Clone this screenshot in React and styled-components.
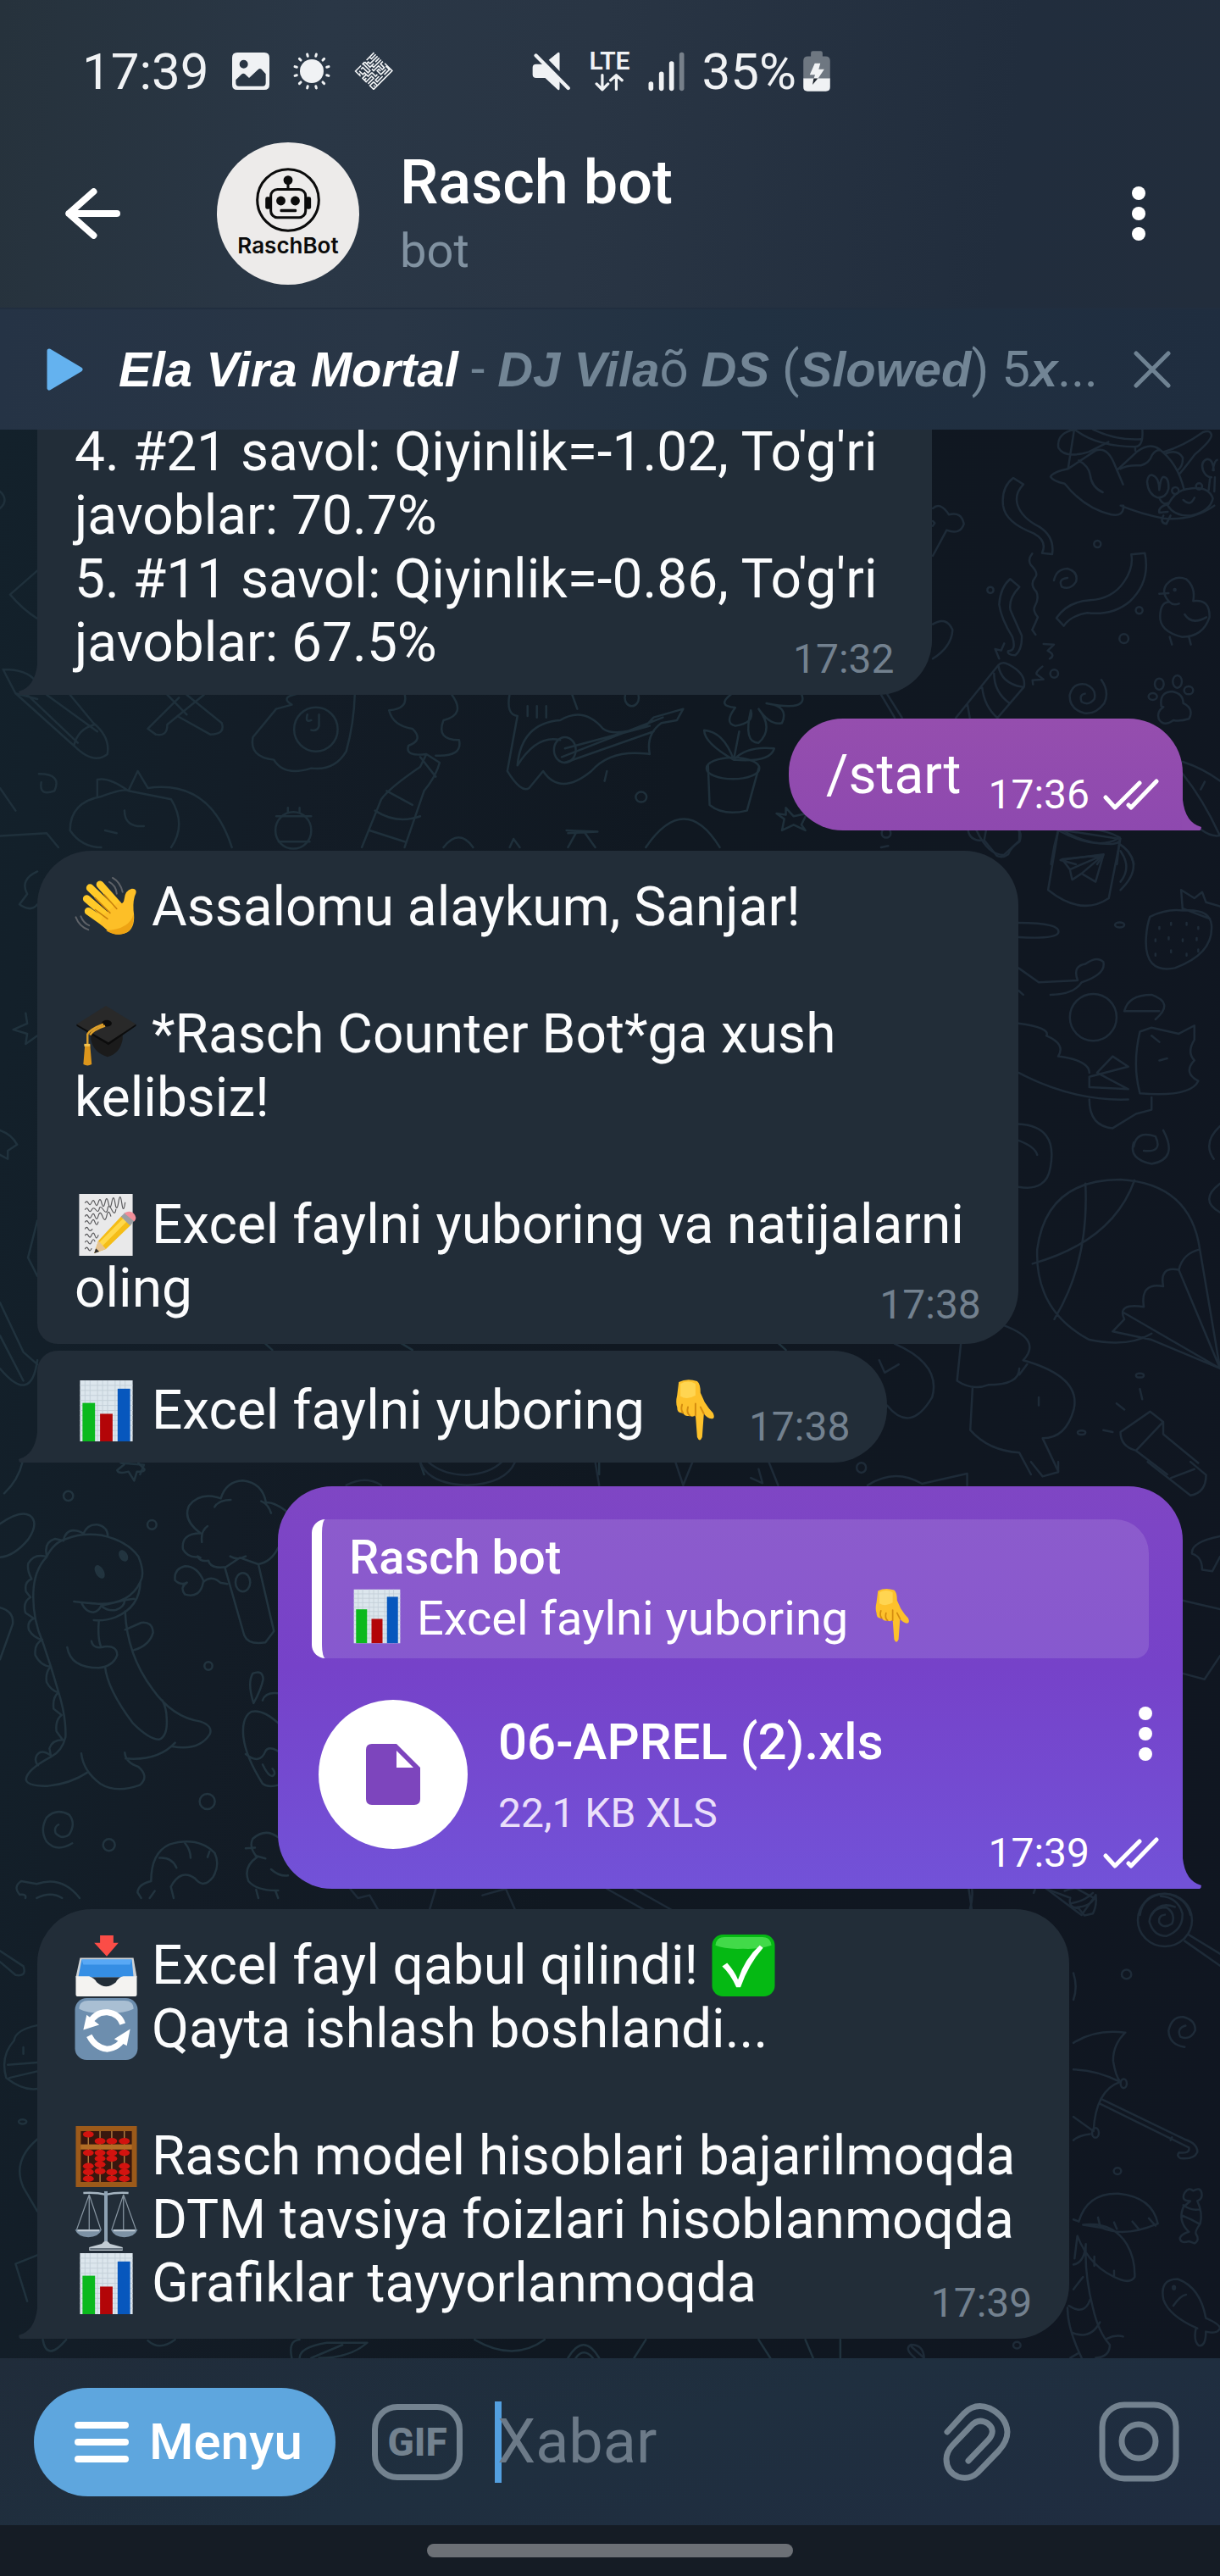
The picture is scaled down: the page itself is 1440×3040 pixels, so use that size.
import React from "react";
import styled, { createGlobalStyle, css } from "styled-components";

const GlobalStyle = createGlobalStyle`
  * { box-sizing: border-box; }
  body { margin: 0; background: #111923; font-family: Roboto, "Noto Sans", sans-serif; }
  button, input { font: inherit; color: inherit; border: 0; padding: 0; margin: 0; background: none; }
  button { cursor: pointer; display: flex; align-items: center; }
  svg { display: block; flex: none; }
`;

/* ---------- layout ---------- */

const Screen = styled.main`
  display: flex;
  flex-direction: column;
  height: 100vh;
  overflow: hidden;
  color: #fff;
`;

const TopBar = styled.header`
  flex: none;
  padding-bottom: 27px;
  background: linear-gradient(97deg, #26323c 0%, #2a3746 26%, #293544 48%, #212d3d 82%, #222d3c 100%);
`;

const StatusBar = styled.div`
  display: flex;
  align-items: center;
  height: 168px;
  padding-left: 97px;
  font-size: 60px;
  color: #f0f2f4;
`;

const StatusGroup = styled.div`
  display: flex;
  align-items: center;
  gap: ${(p) => p.$gap}px;
  & + & { margin-left: 164px; }
`;

const Network = styled.div`
  display: flex;
  flex-direction: column;
  align-items: center;
  gap: 4px;
  font-size: 30px;
  line-height: 21px;
  font-weight: 600;
`;

const BatteryLevel = styled.div`
  display: flex;
  align-items: center;
  gap: 8px;
`;

const ChatHeader = styled.div`
  display: flex;
  align-items: center;
  padding: 0 88px 0 77px;
`;

const Avatar = styled.div`
  display: flex;
  flex-direction: column;
  align-items: center;
  flex: none;
  width: 168px;
  height: 168px;
  margin: 0 48px 0 114px;
  padding-top: 30px;
  border-radius: 50%;
  background: #edebea;
  color: #0b0b0b;
  font: 600 26px/32px Inter, "Liberation Sans", sans-serif;
`;

const Titles = styled.div`
  flex: 1;
  min-width: 0;
`;

const Title = styled.h1`
  margin: 0 0 4px;
  font-size: 72px;
  line-height: 84px;
  font-weight: 500;
`;

const Subtitle = styled.p`
  margin: 0;
  font-size: 56px;
  line-height: 68px;
  color: #8192a1;
`;

const Player = styled.section`
  display: flex;
  align-items: center;
  flex: none;
  height: 144px;
  padding: 0 58px 0 55px;
  border-top: 2px solid #212e3f;
  background: linear-gradient(95deg, #253345 0%, #293646 32%, #213142 60%, #1f2d3f 100%);
`;

const Track = styled.p`
  flex: 1;
  min-width: 0;
  margin: 0 16px 0 42px;
  overflow: hidden;
  white-space: nowrap;
  text-overflow: ellipsis;
  font-size: 60px;
  line-height: 80px;
  color: #728595;
`;

const Fancy = styled.b`
  font-family: "Liberation Sans", Arial, sans-serif;
  font-style: italic;
  font-size: 58px;
  color: ${(p) => (p.$bright ? "#fff" : "inherit")};
`;

const Chat = styled.section`
  position: relative;
  display: flex;
  flex: 1;
  flex-direction: column;
  justify-content: flex-end;
  align-items: flex-start;
  min-height: 0;
  padding: 0 44px 23px;
  overflow: hidden;
  background: linear-gradient(96deg, #13212b 0%, #131c26 24%, #101821 50%, #101621 100%);
`;

const Wallpaper = styled.svg`
  position: absolute;
  inset: 0;
  width: 100%;
  height: 100%;
  path, circle, ellipse { vector-effect: non-scaling-stroke; }
`;

/* ---------- messages ---------- */

const outgoingFill = {
  start: "linear-gradient(#954eae, #8e49af)",
  file: "linear-gradient(#7f46c4 0%, #7642c9 45%, #7252d8 100%)",
};

const Bubble = styled.article`
  position: relative;
  display: grid;
  flex: none;
  max-width: 100%;
  margin-top: ${(p) => p.$gap}px;
  border-radius: 64px;
  font-size: 64px;
  line-height: 75px;
  color: #fbfcfd;
  background: #222d38;
  padding: 29px 44px 14px;
  ${(p) => p.$grouped && css`padding-top: 33px;`}
  ${(p) => p.$lifted && css`padding-bottom: 18px;`}
  ${(p) => p.$inline && css`grid-template-columns: auto auto; column-gap: 32px;`}
  ${(p) => p.$fill && css`
    align-self: flex-end;
    color: #fff;
    background: ${outgoingFill[p.$fill]};
  `}
  ${(p) => p.$corners && css`border-radius: ${p.$corners};`}
`;

const StartBubble = styled(Bubble)`
  padding-right: 28px;
`;

const FileBubble = styled(Bubble)`
  width: 1068px;
  padding: 39px 28px 14px 40px;
`;

const Text = styled.p`
  margin: 0;
  padding-bottom: ${(p) => (p.$grouped ? 10 : 14)}px;
  padding-right: ${(p) => (p.$wide ? 20 : 0)}px;
  white-space: pre-line;
  ${(p) => p.$wide && css`grid-area: 1 / 1;`}
`;

const Line = styled.span`
  display: block;
`;

const Meta = styled.div`
  display: flex;
  align-items: center;
  align-self: end;
  justify-self: end;
  gap: 16px;
  font-size: 48px;
  line-height: 56px;
  color: ${(p) => (p.$bright ? "#fff" : "#73818f")};
  ${(p) => p.$overlaid && css`grid-area: 1 / 1;`}
`;

const Tail = styled.svg`
  position: absolute;
  bottom: 0;
  width: 23px;
  height: 40px;
  ${(p) => (p.$right ? css`right: -22px; transform: scaleX(-1);` : css`left: -22px;`)}
`;

const EmojiBox = styled.svg`
  display: inline-block;
  vertical-align: top;
  width: ${(p) => p.$size}px;
  height: ${(p) => p.$size}px;
`;

const Reply = styled.blockquote`
  margin: 0 12px 49px 0;
  padding: 9px 24px 11px 32px;
  border-left: 12px solid #fff;
  border-radius: 16px 40px 16px 16px;
  background: rgba(255, 255, 255, 0.12);
  font-size: 56px;
  line-height: 72px;
`;

const ReplyName = styled.strong`
  display: block;
  font-weight: 500;
`;

const FileRow = styled.div`
  display: flex;
  align-items: flex-start;
  padding: 0 8px;
`;

const FileBadge = styled.div`
  display: grid;
  place-items: center;
  flex: none;
  width: 176px;
  height: 176px;
  margin-right: 36px;
  border-radius: 50%;
  background: #fff;
`;

const FileInfo = styled.div`
  flex: 1;
  padding-top: 14px;
`;

const FileName = styled.a`
  display: block;
  margin-bottom: 20px;
  color: inherit;
  text-decoration: none;
  font-size: 60px;
  line-height: 72px;
  font-weight: 500;
`;

const FileSize = styled.span`
  display: block;
  font-size: 48px;
  line-height: 56px;
  color: #eadffa;
`;

const FileMeta = styled(Meta)`
  margin-top: -23px;
`;

const MoreButton = styled.button`
  flex: none;
  ${(p) => p.$top && css`margin-top: 8px;`}
`;

/* ---------- composer ---------- */

const Composer = styled.form`
  display: flex;
  align-items: center;
  flex: none;
  height: 197px;
  padding: 0 48px 0 40px;
  color: #73828f;
  background: linear-gradient(165deg, #202c3a 0%, #1f2f3f 50%, #1f2c40 100%);
`;

const MenuButton = styled.button`
  flex: none;
  gap: 24px;
  width: 356px;
  height: 128px;
  padding-left: 48px;
  margin-right: 43px;
  border-radius: 64px;
  background: #5ea6de;
  color: #fff;
  font-size: 60px;
  font-weight: 500;
`;

const GifButton = styled.button`
  flex: none;
  justify-content: center;
  width: 107px;
  height: 90px;
  margin-right: 38px;
  border: 7px solid #73828f;
  border-radius: 30px;
  font-size: 46px;
  font-weight: 800;
`;

const Field = styled.label`
  display: flex;
  align-items: center;
  flex: 1;
  min-width: 0;
`;

const Caret = styled.span`
  flex: none;
  width: 8px;
  height: 96px;
  margin-right: -5px;
  background: #539fdf;
`;

const MessageInput = styled.input`
  width: 100%;
  min-width: 0;
  height: 96px;
  outline: 0;
  font-size: 72px;
  line-height: 96px;
  caret-color: transparent;
  &::placeholder { color: #6c7a88; opacity: 1; }
`;

const Actions = styled.div`
  display: flex;
  align-items: center;
  gap: 104px;
`;

const NavBar = styled.footer`
  display: grid;
  place-items: center;
  flex: none;
  height: 60px;
  background: #151c25;
`;

const NavHandle = styled.div`
  width: 432px;
  height: 16px;
  border-radius: 8px;
  background: #6c7076;
`;

/* ---------- emoji ---------- */

const beads = [
  [16, 12], [30, 20], [44, 20], [59, 20], [16, 34], [30, 34], [44, 34], [59, 34],
  [30, 41], [44, 41], [16, 50], [30, 48], [59, 50], [30, 56], [16, 57], [44, 57],
  [59, 57], [16, 65], [44, 65], [59, 65],
];

const emojiArt = {
  wave: (
    <>
      <g stroke="#ffc928" strokeWidth="9" strokeLinecap="round" fill="none">
        <path d="M30 11 52 36M18 15 46 42M14 28 42 52M16 43 40 60" />
      </g>
      <path d="M33 49 52 32Q58 36 59 28Q60 18 68 16Q74 16 73 21Q69 29 70 42Q73 61 63 68Q52 74 40 67L30 58Z" fill="#fdbf27" />
      <path d="M35 23 50 40M24 27 42 45M24 41 39 52" stroke="#c9820e" strokeWidth="1.6" strokeLinecap="round" />
      <path d="M37 66Q52 75 64 67Q71 60 70 46Q66 64 37 66Z" fill="#eea313" />
      <g stroke="#5e6268" strokeWidth="2" fill="none" strokeLinecap="round">
        <path d="M41 8Q49 12 50 22M45 3Q54 8 57 20M7 49Q10 57 17 60M1 50Q5 61 16 65" />
      </g>
    </>
  ),
  cap: (
    <>
      <path d="M19 37V44Q22 60 39 65Q54 61 57 44V34L40 47Z" fill="#1b1b1b" />
      <path d="M37 4 73 26 40 48 2 26Z" fill="#292929" />
      <path d="M2 26 40 48 73 26V28L40 51 2 28Z" fill="#0c0c0c" />
      <ellipse cx="38" cy="25" rx="6" ry="4" fill="#0b0b0b" />
      <path d="M34 26Q18 32 15 38V50M36 28Q21 33 18 39" fill="none" stroke="#e0a12b" strokeWidth="2.4" />
      <path d="M12 50H18L20 74Q15 77 10 74Z" fill="#dc961c" />
      <path d="M11 51H18" stroke="#f6c450" strokeWidth="3" />
    </>
  ),
  memo: (
    <>
      <path d="M5 1H69V75H5Z" fill="#e9e9ea" />
      <g stroke="#5a5a5d" strokeWidth="1.2" fill="none">
        <path d="M12 12q2-4 4 0t4-1 4 1 4-1 4 1 4-1 4 1 4-1 4 1 4-1 4 1 4-1M12 20q2-4 4 0t4 0 5 0 4-1 5 1 5-1 5 1 5-1M12 28q2-4 4 0t4-1 4 1 4-1 5 1 5-1 5 1M12 35q2-4 4 0t4-1 4 1 4-1M12 43q2-4 4 0t5 0M12 51q2-4 4 0t4-1 4 1 4-1M12 59q2-4 4 0t4-1 4 0M12 67q2-4 4 0t4-1" />
      </g>
      <path d="M23 72 28 57 56 27 67 38 37 67Z" fill="#f5bd17" />
      <path d="M29 59 58 30 62 34 33 63Z" fill="#ffd84b" />
      <path d="M23 72 28 57 37 67Z" fill="#e6c391" />
      <path d="M23 72 25 66 29 70Z" fill="#2d2d2d" />
      <path d="M55 28 60 23 71 33 66 39Z" fill="#9c9fa3" />
      <path d="M59 24Q65 20 70 24 75 29 71 34Z" fill="#f28e99" />
    </>
  ),
  chart: (
    <>
      <path d="M6 2H69V75H6Z" fill="#dce6ed" />
      <path d="M6 8H69M6 14H69M6 20H69M6 26H69M6 32H69M6 38H69M6 44H69M6 50H69M6 56H69M6 62H69M6 68H69M12 2V75M18 2V75M27 2V75M33 2V75M39 2V75M48 2V75M54 2V75M60 2V75" stroke="#c3cfd8" strokeWidth="1" />
      <path d="M9 29H24V75H9Z" fill="#0bb91d" />
      <path d="M30 42H45V75H30Z" fill="#b30508" />
      <path d="M51 12H66V75H51Z" fill="#0757bd" />
    </>
  ),
  down: (
    <g transform="translate(6 0)">
      <path d="M18 4Q28-1 40 3Q44 6 44 17L49 28Q54 36 59 41Q62 48 57 48Q52 47 48 42L46 70Q43 77 40 70L38 43Q35 47 31 44Q26 46 23 41Q16 42 16 34Q14 28 16 20Z" fill="#fdc12b" />
      <path d="M38 44V30M31 44Q27 41 29 34M23 41Q20 37 22 31M48 42 44 34" fill="none" stroke="#d48c10" strokeWidth="2" strokeLinecap="round" />
      <path d="M20 6Q29 1 38 6V20Q28 26 20 21Z" fill="#ffd551" />
    </g>
  ),
  inbox: (
    <>
      <path d="M30 2H46V11H52L38 27 23 11H30Z" fill="#fb4d47" />
      <path d="M6 29H70L74 52H1Z" fill="#cfd3d6" />
      <path d="M8 31H68L70 52H4Z" fill="#358ee4" />
      <path d="M8 31H68L66 37H10Z" fill="#58a8f5" />
      <path d="M1 51H17Q23 53 26 58Q37 68 49 58Q52 52 58 51H74V73Q74 75 72 75H3Q1 75 1 73Z" fill="#f4f3f1" />
    </>
  ),
  refresh: (
    <>
      <rect x="0" y="1" width="75" height="74" rx="14" fill="#6d8eae" />
      <path d="M5 14Q5 4 16 4H59Q70 4 70 14Q58 20 37 19 16 20 5 14Z" fill="#a9bfd3" />
      <g fill="none" stroke="#fff" strokeWidth="7">
        <path d="M16 33Q24 17 39 18 53 20 57 32M17 46Q24 60 38 62 53 61 60 46" />
      </g>
      <path d="M14 21 10 39 29 33ZM66 38 47 50 62 58Z" fill="#fff" />
    </>
  ),
  abacus: (
    <>
      <path d="M1 2H74V75H1Z" fill="#9c5a1a" />
      <path d="M7 8H68V24H7ZM7 30H68V69H7Z" fill="#38170e" />
      <path d="M16 8V69M30 8V69M44 8V69M59 8V69" stroke="#b07a40" strokeWidth="1.5" />
      <path d="M7 24H68V30H7Z" fill="#b36d25" />
      <g fill="#d3130f">
        {beads.map(([x, y]) => <ellipse key={`${x}-${y}`} cx={x} cy={y} rx="6.5" ry="3.8" />)}
      </g>
    </>
  ),
  scales: (
    <>
      <path d="M10 6Q25 5 37 8 49 5 64 6" fill="none" stroke="#a5b4c0" strokeWidth="2.5" />
      <path d="M37 4V66" stroke="#8ea2b3" strokeWidth="4" />
      <path d="M17 8 2 50M17 8 31 50M17 8V50M58 8 44 50M58 8 73 50M58 8V50" stroke="#8795a1" strokeWidth="1.3" />
      <path d="M0 50H32Q28 59 16 59 4 59 0 50ZM43 50H75Q71 59 59 59 47 59 43 50Z" fill="#7d92a5" />
      <path d="M3 51H29M46 51H72" stroke="#c3ced7" strokeWidth="2" />
      <path d="M32 67Q37 60 42 67L57 71V75H17V71Z" fill="#c2ccd4" />
      <path d="M18 73H57" stroke="#65727e" strokeWidth="2" />
    </>
  ),
  check: (
    <>
      <rect x="0" y="1" width="75" height="74" rx="13" fill="#05b913" />
      <path d="M4 14Q5 4 15 4H60Q70 4 71 14 56 19 37 18 16 19 4 14Z" fill="#42da49" />
      <path d="M12 39 18 35Q27 45 31 55 39 30 57 14L61 17Q44 36 34 64H29Q22 48 12 39Z" fill="#fff" />
    </>
  ),
};

const Emoji = ({ name, size = 75 }) => (
  <EmojiBox $size={size} viewBox="0 0 75 76" role="img" aria-label={name}>{emojiArt[name]}</EmojiBox>
);

/* ---------- small drawings ---------- */

const BubbleTail = ({ right, color }) => (
  <Tail $right={right} viewBox="0 0 23 40" aria-hidden="true">
    <path d="M22 0H23V40H2Q0 39 0 36 19 31 22 4Z" fill={color} />
  </Tail>
);

const Checks = () => (
  <svg width="66" height="38" viewBox="0 0 66 38" fill="none" stroke="#fff" strokeWidth="5" strokeLinecap="round" strokeLinejoin="round" aria-label="read">
    <path d="M3 22 14 34 43 5M30 31 33 34 63 3" />
  </svg>
);

const Dots = () => (
  <svg width="16" height="64" viewBox="0 0 16 64" fill="#fff" aria-hidden="true">
    <circle cx="8" cy="8" r="8" /><circle cx="8" cy="32" r="8" /><circle cx="8" cy="56" r="8" />
  </svg>
);

const Robot = () => (
  <svg width="76" height="76" viewBox="788 473 224 224" fill="none" stroke="#0b0b0b" strokeWidth="9" aria-hidden="true">
    <circle cx="900" cy="585" r="107" />
    <rect x="840" y="548" width="121" height="98" rx="23" />
    <path d="M900 548V516" />
    <g fill="#0b0b0b" stroke="none">
      <circle cx="900" cy="516" r="16" /><circle cx="875" cy="588" r="16" /><circle cx="925" cy="588" r="16" />
      <rect x="821" y="574" width="18" height="43" rx="7" /><rect x="962" y="574" width="18" height="43" rx="7" />
      <rect x="872" y="617" width="58" height="10" rx="4" />
    </g>
  </svg>
);

const PhotoIcon = () => (
  <svg width="44" height="44" viewBox="0 0 132 132" aria-hidden="true">
    <path fillRule="evenodd" fill="#f0f2f4" d="M18 0H114Q132 0 132 18V114Q132 132 114 132H18Q0 132 0 114V18Q0 0 18 0ZM41 26A15 15 0 1 0 41 56 15 15 0 1 0 41 26ZM13 97V108Q13 119 24 119H108Q119 119 119 108V76L104 59Q98 54 92 60L60 90 45 76Q39 72 33 77Z" />
  </svg>
);

const SunIcon = () => (
  <svg width="44" height="44" viewBox="-66 -66 132 132" stroke="#f0f2f4" strokeWidth="9" strokeLinecap="round" aria-hidden="true">
    <circle r="42" fill="#f0f2f4" stroke="none" />
    {Array.from({ length: 12 }, (_, i) => <path key={i} d="M0-55V-62" transform={`rotate(${15 + i * 30})`} />)}
  </svg>
);

const KuficIcon = () => (
  <svg width="46" height="46" viewBox="-70 -70 140 140" aria-hidden="true">
    <g transform="rotate(45) translate(-48 -48)" fill="none" stroke="#f0f2f4" strokeWidth="5">
      <path d="M2 0V38M11 0V22H2M20 0V38H11V47M29 0V20M29 28V47H2M38 0V38H29M47 0V12H66V22H47V47H38M56 0H94V94M66 4H84V30M75 12V38H56V30H66M84 38V66H75V47M47 56H66V47M2 56H38V66H11V75M2 66V94H28M11 84H29V75H47V56M38 75V94H56V66H66V94M75 75V94H94M75 75H94M84 84H90M20 94V88M47 84V96M2 47V60" />
    </g>
  </svg>
);

const MuteIcon = () => (
  <svg width="46" height="46" viewBox="86 94 138 140" fill="#f0f2f4" aria-hidden="true">
    <path d="M145 124 178 97Q184 94 184 101V164ZM100 139H112L130 140 184 193V226Q184 235 177 230L132 188H100Q87 188 87 176V151Q87 139 100 139Z" />
    <path d="M99 108 215 225" stroke="#f0f2f4" strokeWidth="13" strokeLinecap="round" />
  </svg>
);

const DataArrows = () => (
  <svg width="34" height="22" viewBox="310 172 104 68" fill="none" stroke="#f0f2f4" strokeWidth="10" strokeLinecap="round" strokeLinejoin="round" aria-hidden="true">
    <path d="M337 180V233M316 212 337 233 358 212M388 232V181M367 199 388 180 409 199" />
  </svg>
);

const SignalIcon = () => (
  <svg width="43" height="47" viewBox="490 95 129 141" stroke="#f0f2f4" strokeWidth="17" strokeLinecap="round" aria-hidden="true">
    <path d="M500 209V225M537 174V225M573 137V225" />
    <path d="M609 106V225" stroke="#77808a" />
  </svg>
);

const BatteryIcon = () => (
  <svg width="32" height="48" viewBox="1047 92 96 146" aria-hidden="true">
    <path d="M1074 112V100Q1074 93 1081 93H1109Q1116 93 1116 100V112H1126Q1143 112 1143 128V192H1047V128Q1047 112 1064 112Z" fill="#6e7781" />
    <path d="M1047 191H1143V222Q1143 237 1128 237H1062Q1047 237 1047 222Z" fill="#f0f2f4" />
    <path d="M1088 137H1108L1102 158H1122L1099 192H1084L1089 178H1070Z" fill="#f0f2f4" />
    <path d="M1084 191H1099L1080 214Z" fill="#1c232b" />
  </svg>
);

const BackIcon = () => (
  <svg width="65" height="60" viewBox="110 543 196 180" fill="none" stroke="#fff" strokeWidth="24" strokeLinecap="round" strokeLinejoin="round" aria-hidden="true">
    <path d="M211 555 123 633 211 711M123 633H294" />
  </svg>
);

const PlayIcon = () => (
  <svg width="43" height="50" viewBox="0 0 43 50" aria-hidden="true">
    <path d="M3 3 40 25 3 47Z" fill="#64b2ef" stroke="#64b2ef" strokeWidth="5" strokeLinejoin="round" />
  </svg>
);

const CloseIcon = () => (
  <svg width="44" height="44" viewBox="0 0 44 44" stroke="#6f8292" strokeWidth="5" strokeLinecap="round" aria-hidden="true">
    <path d="M3 3 41 41M41 3 3 41" />
  </svg>
);

const FileIcon = () => (
  <svg width="64" height="72" viewBox="0 0 64 72" aria-hidden="true">
    <path fillRule="evenodd" d="M7 0H36L64 28V65Q64 72 57 72H7Q0 72 0 65V7Q0 0 7 0ZM36 8V28H56Z" fill="#7d45bd" />
  </svg>
);

const MenuIcon = () => (
  <svg width="64" height="48" viewBox="0 0 64 48" stroke="#fff" strokeWidth="8" strokeLinecap="round" aria-hidden="true">
    <path d="M4 4H60M4 24H60M4 44H60" />
  </svg>
);

const ClipIcon = () => (
  <svg width="80" height="92" viewBox="0 0 80 92" fill="none" stroke="#73828f" strokeWidth="7" strokeLinecap="round" aria-hidden="true">
    <path d="M5 34 25 12Q38-1 55 6 75 16 76 34 76 45 66 56L41 82Q31 91 18 87 4 81 4 66 4 58 11 50L33 27Q42 17 53 24 63 32 54 43L30 68" />
  </svg>
);

const CameraIcon = () => (
  <svg width="95" height="95" viewBox="0 0 95 95" fill="none" stroke="#73828f" strokeWidth="7" aria-hidden="true">
    <rect x="4" y="4" width="87" height="87" rx="26" /><circle cx="47" cy="47" r="20" />
  </svg>
);

/* Line doodles behind the conversation, grouped by the area they cover. */
const Doodles = () => (
  <Wallpaper viewBox="0 507 1440 2276" preserveAspectRatio="xMidYMid slice" fill="none" stroke="#1e2b38" strokeWidth="2.5" strokeLinecap="round" strokeLinejoin="round" aria-hidden="true">
    <g transform="translate(1040 500) scale(.3333)">
      <path d="M684 20Q620 35 628 85 650 125 735 100L805 65M684 20 662 160Q610 170 600 188 610 205 650 212 720 300 815 322 860 330 858 290L848 290Q920 320 1000 335 1100 345 1180 290M665 158 760 95Q800 80 825 140L857 215M700 130Q735 150 740 180 745 225 785 243M835 165 905 100Q950 65 985 90 1050 140 1072 230M848 160Q870 145 920 148 950 140 960 110 975 90 990 95M685 20Q760 80 900 82 930 80 925 20M750 20Q830 60 920 55M900 82V95M1000 100Q1070 80 1140 30 1165 20 1170 40 1170 60 1110 110 1080 150 1055 180M1010 105Q1050 90 1068 120 1070 150 1050 165" />
      <path d="M985 235Q990 190 1000 188 1020 190 1018 230 1010 262 980 262 945 250 942 205 945 180 960 182 985 190 985 235M1175 165Q1180 130 1190 128M1178 165Q1175 125 1155 125 1130 135 1140 165 1150 190 1170 190M1015 290Q1040 235 1090 230 1160 220 1175 265 1165 310 1100 325 1040 330 1015 290M1070 270Q1095 295 1110 262M985 262Q995 290 1018 280M1160 235 1165 190M1182 190 1180 240M1015 285Q980 295 985 315L1015 312M1000 325Q985 350 1010 355L1025 325" />
      <circle cx="1042" cy="237" r="12" /><circle cx="1126" cy="222" r="11" />
      <path d="M468 192 504 215Q470 250 484 290 500 335 560 365 615 400 606 462L570 458Q590 415 540 388 440 350 432 290 425 225 468 192ZM457 550 490 578Q450 620 458 660 480 710 498 750 500 800 475 820 445 818 450 805 480 805 465 755 425 690 418 640 422 580 457 550ZM886 463 934 458Q955 560 880 630 820 680 730 670 670 680 647 716L621 688Q660 630 740 625 820 620 860 560 895 510 886 463Z" />
      <path d="M535 460Q518 480 530 500 560 530 545 545 525 570 550 595 560 620 545 645 535 660 555 685 545 710 535 730L547 747M612 555Q620 515 660 513 700 525 690 560 670 590 640 578 625 550 660 546M780 907Q810 950 790 990 760 1030 720 1025 665 1010 668 960 680 915 725 923 765 940 755 975 735 1000 710 985 700 960 722 956M404 798 418 832 404 798 425 803 436 778M575 780 612 782 590 804Q620 820 597 832M571 860Q540 885 555 890L575 905 536 908 538 923" />
      <path d="M265 1041 415 855Q430 840 450 852 515 885 506 932L412 1042M415 855Q425 920 500 932M400 885Q400 950 455 990M358 935Q365 1000 412 1042M306 995 314 1041M183 300Q210 275 240 322 285 310 293 355 280 395 232 377L183 468M183 345 190 352 183 362M183 710Q230 680 253 730 250 790 183 832M0 960 48 1041M20 955 74 1041" />
      <path d="M1022 632Q990 600 1010 570 1040 535 1080 550 1115 580 1105 628 1165 620 1163 685 1140 755 1065 755 985 735 988 680 990 630 1022 632 1035 645 1055 637M985 602 1018 600M1075 675Q1100 715 1152 685M1022 755 1030 782M1090 755 1097 782" />
      <path d="M992 1000Q985 950 1030 948 1070 955 1070 990 1110 1010 1090 1045 1060 1055 1035 1050 1000 1075 983 1045 975 1020 1000 1003Z" />
      <ellipse cx="985" cy="922" rx="16" ry="20" /><ellipse cx="1049" cy="913" rx="16" ry="22" /><ellipse cx="1089" cy="944" rx="16" ry="14" /><ellipse cx="962" cy="966" rx="15" ry="12" />
      <circle cx="766" cy="426" r="12" /><circle cx="387" cy="589" r="11" /><circle cx="914" cy="661" r="12" /><circle cx="860" cy="761" r="16" /><circle cx="613" cy="885" r="14" /><circle cx="1040" cy="588" r="3" /><circle cx="18" cy="1450" r="16" />
      <path d="M1068 1197Q1140 1220 1200 1265M1068 1240Q1140 1330 1198 1455M1146 1268 1132 1295M1130 1435Q1170 1465 1200 1458M308 1440Q315 1480 365 1475L410 1530Q430 1540 450 1525 460 1500 490 1480 500 1450 485 1438M365 1475 372 1438M628 1437Q610 1500 602 1560M628 1437 845 1470 835 1560M640 1438Q720 1490 820 1488 850 1485 845 1465 800 1440 750 1437M845 1490Q885 1510 895 1560M635 1545 788 1525 765 1560M635 1545 690 1560M0 1500 25 1495" />
    </g>
    <g transform="translate(0 500) scale(.9184 .3333)" stroke="#1f303b">
      <path d="M4 870 20 955 95 1140Q120 1210 138 1170 142 1110 120 1060L90 960M20 955 48 975M35 960 100 1130M60 960 125 1090M95 1140Q100 1080 122 1065M4 870Q35 870 45 910M13 605 48 520M13 605Q30 660 48 690M0 240Q12 270 0 300" />
      <path d="M200 1100 190 1080 230 970M200 1100Q215 1110 215 1065L262 960M228 1035 270 1100Q290 1100 285 1060L240 960M215 960 240 1030" />
      <path d="M355 1010Q340 1060 325 1110 320 1180 352 1190 365 1250 400 1220 430 1230 445 1160 455 1060 456 958M355 1010 375 995Q360 970 380 958M395 1030Q392 1060 400 1050M410 1030V1070Q408 1090 400 1085" /><ellipse cx="406" cy="1082" rx="28" ry="78" />
      <path d="M520 957Q525 1010 500 1015 505 1070 530 1080 545 1120 525 1140 520 1180 548 1170L540 1215Q500 1290 490 1330L465 1500M548 1170 565 1200Q560 1250 545 1300L520 1500M580 957Q600 1030 570 1050 560 1120 590 1120 595 1180 560 1175M540 1180 560 1250M497 1300 530 1350M482 1370Q510 1420 540 1390M475 1440 520 1480" />
      <path d="M655 957Q650 1030 665 1035L652 1230Q670 1310 680 1290L698 1230Q720 1320 760 1230 785 1150 835 1170 830 1100 850 1060L870 1050 878 1010 840 1040 830 1070Q790 1110 775 1080 750 1000 720 1050 670 1060 665 1210 690 1100 720 1120M722 1180 852 1040M726 1150 835 1070M726 1200 840 1090M780 1230 777 1265M735 957 742 1010M678 1000V1035M690 1000V1040M702 1000V1040" /><ellipse cx="726" cy="1155" rx="14" ry="45" /><ellipse cx="812" cy="970" rx="9" ry="30" />
      <path d="M940 957Q920 1000 945 1005 930 1060 945 1070 970 1060 965 1015 955 1130 975 1130 995 1080 975 1010 990 1070 1005 1060 1015 1000 985 990 1040 1020 1030 957M943 1190Q905 1130 905 1085 930 1090 943 1190 960 1140 995 1150 990 1200 943 1190ZM943 1190 950 1090M910 1210 912 1350Q930 1390 960 1370L975 1220" /><ellipse cx="942" cy="1220" rx="34" ry="38" />
      <path d="M50 1240Q80 1240 70 1300 50 1320 53 1270M90 1440Q90 1340 130 1320 160 1290 165 1300L177 1230 190 1290Q270 1260 298 1500M90 1440Q105 1500 130 1500M125 1320V1260Q140 1250 165 1300L220 1330Q240 1420 220 1500M135 1440 150 1450M160 1370Q160 1430 185 1425M0 1290 20 1370M0 1460 60 1450 75 1500" />
      <ellipse cx="377" cy="1440" rx="23" ry="65" /><path d="M355 1390H400M370 1360V1375M385 1360V1375M358 1480H398" />
      <ellipse cx="824" cy="1322" rx="7" ry="18" /><path d="M570 1500Q590 1430 608 1500M655 1500 660 1470 668 1500M728 1440 768 1445 730 1450M740 1450 730 1500M752 1450 765 1500M830 1500Q880 1300 925 1500M1010 1360 1020 1390 1037 1380 1030 1420 1035 1440 1020 1420 1005 1440 1008 1400 998 1380 1010 1385Z" />
    </g>
    <g transform="translate(0 980) scale(.9184 .4847)">
      <path d="M1360 0 1347 145Q1390 210 1425 165L1440 20M1360 0Q1410 50 1437 20M1437 30Q1475 80 1440 145M1440 50Q1455 90 1440 125M1365 70 1418 60 1408 125 1390 105 1378 120 1375 95ZM1375 95 1418 60 1390 105M1255 0Q1270 60 1290 60L1310 25V0" />
      <path d="M1478 210Q1500 190 1520 195 1555 190 1557 230 1560 300 1510 335 1470 350 1473 260 1474 230 1478 210ZM1520 195 1518 145 1535 165 1545 150 1550 175 1568 185M1520 190 1555 215" />
      <path d="M1490 235v5M1505 225v5M1525 225v5M1540 235v5M1485 265v5M1502 260v5M1520 265v5M1538 262v5M1485 300v5M1505 292v5M1525 300v5M1540 290v5" />
      <path d="M1309 225Q1365 225 1360 250 1355 265 1309 260M1309 335 1335 370 1385 365Q1378 330 1395 325 1410 305 1418 320 1422 350 1390 370 1380 400 1350 400M1445 440Q1450 400 1480 400 1510 420 1485 460M1445 440 1490 440M1309 390 1315 400M1309 470Q1350 480 1345 500 1370 520 1360 550 1400 560 1400 590M1309 590Q1380 660 1450 655M1465 640Q1455 570 1465 490L1480 480 1515 495 1535 475V510Q1525 540 1535 560 1520 590 1540 610 1530 650 1465 640M1490 560 1500 555M1480 500 1490 515M1400 625 1450 630 1410 590 1430 550 1450 575 1400 600ZM1400 655Q1400 720 1430 725L1460 690 1480 680V650" /><ellipse cx="1405" cy="455" rx="30" ry="57" />
      <path d="M1457 770Q1460 730 1485 745 1495 785 1470 780M1495 730Q1515 800 1480 812 1450 800 1457 760M1309 715Q1360 720 1350 820 1345 880 1309 868M1309 755Q1330 770 1333 790" />
      <path d="M1400 1240Q1330 1170 1333 1020 1345 850 1440 850 1530 860 1542 1020M1400 1240Q1450 1260 1480 1225M1395 860Q1400 1050 1355 1190M1458 852Q1430 1000 1327 1055M1542 1020Q1520 1030 1515 1070 1490 1060 1495 1110 1465 1100 1470 1160 1435 1150 1445 1190L1430 1220 1480 1240M1542 1020 1568 1310M1515 1070 1568 1310 1445 1175M1480 1240 1568 1310M1568 930Q1540 900 1568 860M1568 720Q1545 760 1560 800" />
      <path d="M1235 1248 1230 1340Q1250 1365 1270 1350 1310 1350 1310 1310M1290 1205Q1340 1240 1315 1290 1390 1330 1380 1410 1370 1480 1340 1480L1360 1560M1250 1355 1247 1460Q1270 1510 1310 1515L1325 1568M1320 1300 1310 1325M1335 1380V1400M1150 1250Q1210 1300 1198 1380 1170 1470 1140 1400M1130 1290 1137 1320 1155 1300M1440 1465 1478 1415 1495 1440 1460 1510Q1440 1500 1440 1465ZM1495 1440V1470L1540 1540M1460 1510 1500 1568M1435 1395 1445 1410M1465 1360 1468 1385M1418 1460 1430 1465" />
      <circle cx="1439" cy="230" r="6" /><circle cx="1465" cy="1327" r="5" /><circle cx="1390" cy="1466" r="5" />
      <g stroke="#20323d"><path d="M48 100Q25 120 35 155L25 180Q40 200 48 180M33 445 35 470 17 485 35 495 33 520 48 500M0 730Q15 740 22 765L10 780V800L0 790M48 950 36 1040 48 1085M0 1150 30 1270 48 1300M0 1230 30 1340M0 1310Q40 1400 48 1290M340 1248 350 1265M515 1248 530 1265M1000 1248 1010 1265M155 1540 185 1545 180 1568M540 1540 545 1568M770 1540V1568" /></g>
    </g>
    <g transform="translate(0 1720) scale(.3333)" stroke="#22343f">
      <path d="M165 352Q190 300 235 288 290 265 360 275 450 295 490 350 515 410 497 440 460 520 350 518 300 515 262 510M497 440Q495 530 410 565 370 580 332 576M290 518Q305 548 330 548 350 545 358 525 380 545 410 540 440 530 442 505M358 525 442 505 475 500M165 352Q120 400 118 480 115 570 150 650L180 740 207 830Q235 920 232 990 220 1040 180 1060 95 1105 92 1140 95 1165 170 1163 250 1155 310 1115M225 295Q230 260 260 258 285 260 295 270 310 235 345 238 380 245 382 278M165 345Q155 300 195 288L225 295M160 350Q120 340 100 375 95 400 112 430 85 440 92 475L108 495Q80 510 90 550L120 570Q95 580 102 610 120 640 150 645 120 660 125 700 145 740 180 740 160 760 165 795 180 825 207 832 185 850 190 890L218 912Q195 930 200 970L222 1000Q185 1000 175 1030L180 1055Q145 1030 130 1055 120 1075 135 1090" />
      <path d="M350 580Q345 640 358 672M324 650Q330 680 370 670 415 665 415 700 400 740 350 745 250 745 238 672M443 545Q450 700 540 820 610 920 710 935 755 950 743 980 705 1040 610 1023M443 610 500 585Q540 580 542 620 530 665 475 682M372 740Q380 820 470 940 530 1000 565 998 595 985 590 920 590 890 575 860M620 1010Q560 1075 445 1066M442 1045Q445 1080 490 1095 530 1130 495 1160 410 1190 355 1155 295 1110 288 1048" />
      <ellipse cx="353" cy="405" rx="11" ry="22" fill="#22343f" transform="rotate(-30 353 405)" /><ellipse cx="437" cy="348" rx="11" ry="18" fill="#22343f" transform="rotate(-30 437 348)" />
      <path d="M710 268Q645 220 670 170 710 120 782 145 800 85 860 82 930 90 942 160 970 155 1020 195M710 268Q640 270 648 325 665 355 700 352 710 370 738 365 745 395 800 388L850 355 915 378Q960 370 985 320M760 175Q775 150 817 150M735 243Q710 260 715 300M925 155Q950 165 960 197M700 350 710 355M815 350Q840 365 870 350M797 392 865 630Q880 665 940 655L970 615 915 378M722 440Q700 385 655 385 615 395 620 435 640 455 662 443 635 460 655 485 710 500 720 440 750 415 780 443L805 448" /><ellipse cx="860" cy="442" rx="26" ry="33" />
      <path d="M898 870Q875 800 895 765 930 750 932 785 925 820 898 870ZM930 860Q940 830 985 835M985 940Q930 890 890 900 855 920 862 990 870 1060 930 1155 950 1170 985 1160M870 1050Q920 1090 940 1040 950 1020 985 1040M930 1087Q950 1130 965 1128 980 1120 965 1102" />
      <path d="M207 1300Q190 1310 197 1330 220 1355 245 1335 270 1295 245 1265 200 1240 165 1275 140 1320 165 1360 200 1400 256 1366M535 1500Q535 1400 600 1370 700 1340 760 1400 780 1440 755 1485 720 1530 690 1490 640 1455 605 1520L615 1560M535 1500Q490 1510 487 1540L500 1560M530 1560 548 1535M565 1418Q610 1415 625 1453M655 1365Q675 1390 675 1418M735 1415 742 1395M90 1560Q95 1545 70 1548 45 1520 75 1500L130 1510Q220 1480 282 1560M130 1560Q180 1535 220 1560" />
      <path d="M910 1415Q880 1380 895 1350 940 1310 985 1345M870 1384 903 1382M910 1415Q860 1450 880 1500 910 1535 985 1533M905 1410 940 1420M960 1458Q990 1485 1020 1480M907 1530 915 1560M975 1533 985 1560M80 15Q65 80 15 127M0 235Q70 185 105 205 140 230 100 290 50 350 0 353M0 532Q50 545 45 590L0 715M430 17 440 25 415 45Q420 60 455 50L475 82 485 50Q525 50 505 35L490 20" />
      <circle cx="242" cy="136" r="17" /><circle cx="538" cy="238" r="16" /><circle cx="738" cy="738" r="14" /><circle cx="734" cy="1218" r="27" /><circle cx="386" cy="1372" r="21" />
    </g>
    <g transform="translate(0 1720) scale(.9184 .3444)">
      <path d="M540 15Q550 90 600 95 650 90 662 15M550 15Q570 60 600 60 630 55 645 15M445 95Q470 60 490 95M765 15 770 95M868 15 878 95 890 15M988 15 1000 95M965 70 980 88 975 40M1115 95Q1150 35 1185 90L1243 55V95M1325 15 1340 65 1360 50V15M1475 15 1530 130Q1550 120 1550 60L1530 15M1505 70 1535 40M1568 270Q1530 290 1532 330 1545 340 1545 385L1558 390 1568 340M1520 490 1568 520M1520 740 1548 760 1568 680M450 1478 460 1510 475 1500 490 1568M560 1478 550 1568M620 1500 650 1478 665 1568M780 1478 840 1568M815 1478 875 1568M1245 1478 1250 1568M1345 1478 1390 1568 1408 1500M1465 1568Q1470 1490 1500 1495 1525 1510 1530 1568M1480 1568Q1490 1520 1510 1540" /><ellipse cx="1107" cy="35" rx="6" ry="17" />
    </g>
    <g transform="translate(1060 2200) scale(.3333 .4847)">
      <ellipse cx="945" cy="136" rx="96" ry="64" /><path d="M945 123Q920 125 925 142 940 158 970 145 985 120 950 105 895 105 890 140 905 175 950 175 1010 160 1007 120 990 80 930 78M1030 172 1140 218M1015 187 1140 247M525 60 610 82M590 65Q630 55 640 62L700 85M610 82Q600 105 640 108L660 125 690 120Q705 100 700 75M615 95Q660 90 690 70M625 105Q680 105 698 80M480 70 485 62M262 62Q265 85 255 108" />
      <path d="M1015 445Q960 440 958 405 970 370 1010 372 1055 380 1052 405 1035 430 1000 420 985 400 1018 393M621 435Q700 400 805 410 760 440 762 480 770 515 787 530 700 550 692 650L621 615M621 500Q700 500 787 530M720 572 1015 670Q1060 680 1060 700 1050 720 1000 716 985 710 995 702 1035 705 1030 690L712 582M970 665 965 672M621 672Q640 660 680 657M621 265Q637 300 621 330" /><circle cx="799" cy="534" r="11" /><circle cx="699" cy="654" r="12" />
      <path d="M640 870Q670 800 780 802 900 810 920 875 800 910 720 885L655 878Q760 870 810 925 840 960 838 1005 825 1020 790 1012 680 985 635 905L625 960M621 865 640 870M708 860 717 885M765 872 775 888M830 870 852 888M888 862 912 880M695 955V978M765 990V1005M621 975Q660 970 665 925 660 1000 690 1080 710 1140 750 1170 750 1200 700 1202M655 1005 621 1035M605 1075Q660 1100 680 1060M615 1140Q680 1160 715 1115M600 1080Q600 1130 650 1202M610 1202 640 1190M740 1155Q770 1145 797 1150" />
      <path d="M1035 820Q1000 820 1015 800 1030 785 1045 795 1070 785 1075 800 1080 815 1060 820 1080 850 1070 875 1050 895 1055 900 1070 915 1050 923L1030 918Q1000 925 998 910 1005 900 1030 895 990 870 1010 835ZM1010 830Q1040 845 1070 840M1005 855Q1040 865 1065 875" />
      <path d="M1060 1130Q960 1100 940 1060 925 1010 990 1010 1070 1030 1090 1105 1140 1120 1140 1130 1130 1145 1090 1138 1090 1175 1065 1172 1045 1160 1055 1130M975 1075Q1000 1050 1020 1048" /><circle cx="977" cy="1031" r="4" />
      <path d="M92 1202Q90 1170 45 1170 20 1180 60 1202M48 1175 92 1202" /><ellipse cx="421" cy="1171" rx="13" ry="8" /><ellipse cx="809" cy="268" rx="17" ry="11" /><ellipse cx="777" cy="747" rx="13" ry="8" />
    </g>
    <g transform="translate(0 2230) scale(.9184 .5166)" stroke="#20323d">
      <path d="M0 140 30 175Q35 200 20 195L0 165M48 310Q20 320 18 345 0 380 8 430 30 460 48 455M10 400 48 395M12 430 48 415M30 360V375M48 570Q15 620 30 680L48 735M48 835 20 855 35 940M55 1028Q60 1080 85 1028M190 1030Q205 1055 225 1028M375 1070Q370 1030 385 1028M385 1070Q385 1045 420 1035L472 1035Q450 1070 410 1070M400 1070 440 1040M610 1028Q660 1080 700 1028M730 1070Q750 1010 770 1070M740 1070Q750 1045 762 1070M815 1070 830 1028M975 1028 990 1070M1035 1028 1045 1070M1080 1028V1070" />
      <circle cx="29" cy="530" r="5" />
    </g>
  </Wallpaper>
);

const resultLines = [
  "4. #21 savol: Qiyinlik=-1.02, To'g'ri",
  "javoblar: 70.7%",
  "5. #11 savol: Qiyinlik=-0.86, To'g'ri",
  "javoblar: 67.5%",
];

export default function App() {
  return (
    <Screen>
      <GlobalStyle />
      <TopBar>
        <StatusBar>
          <StatusGroup $gap={28}>
            <time>17:39</time>
            <PhotoIcon />
            <SunIcon />
            <KuficIcon />
          </StatusGroup>
          <StatusGroup $gap={21}>
            <MuteIcon />
            <Network>LTE<DataArrows /></Network>
            <SignalIcon />
            <BatteryLevel>35%<BatteryIcon /></BatteryLevel>
          </StatusGroup>
        </StatusBar>
        <ChatHeader>
          <button type="button" aria-label="Back"><BackIcon /></button>
          <Avatar><Robot />RaschBot</Avatar>
          <Titles>
            <Title>Rasch bot</Title>
            <Subtitle>bot</Subtitle>
          </Titles>
          <MoreButton type="button" aria-label="More"><Dots /></MoreButton>
        </ChatHeader>
      </TopBar>

      <Player>
        <button type="button" aria-label="Play"><PlayIcon /></button>
        <Track>
          <Fancy $bright>Ela Vira Mortal</Fancy> - <Fancy>DJ Vila</Fancy>õ <Fancy>DS</Fancy> (<Fancy>Slowed</Fancy>) 5<Fancy>x</Fancy>...
        </Track>
        <button type="button" aria-label="Close"><CloseIcon /></button>
      </Player>

      <Chat>
        <Doodles />
        <Bubble $gap={0} $grouped $corners="0 0 64px 0">
          <Text $wide $grouped>
            {resultLines.map((line) => <Line key={line}>{line}</Line>)}
          </Text>
          <Meta $overlaid><time>17:32</time></Meta>
          <BubbleTail color="#222d38" />
        </Bubble>

        <StartBubble $gap={28} $inline $fill="start" $corners="64px 64px 0 64px">
          <Text>/start</Text>
          <Meta $bright><time>17:36</time><Checks /></Meta>
          <BubbleTail right color="#8f4aaf" />
        </StartBubble>

        <Bubble $gap={24} $lifted $corners="64px 64px 64px 24px">
          <Text $wide $grouped>
            <Emoji name="wave" /> Assalomu alaykum, Sanjar!{"\n\n"}
            <Emoji name="cap" /> *Rasch Counter Bot*ga xush{"\n"}kelibsiz!{"\n\n"}
            <Emoji name="memo" /> Excel faylni yuboring va natijalarni{"\n"}oling
          </Text>
          <Meta $overlaid><time>17:38</time></Meta>
        </Bubble>

        <Bubble $gap={8} $inline $grouped $corners="24px 64px 64px 0">
          <Text $grouped><Emoji name="chart" /> Excel faylni yuboring <Emoji name="down" /></Text>
          <Meta><time>17:38</time></Meta>
          <BubbleTail color="#222d38" />
        </Bubble>

        <FileBubble $gap={28} $fill="file" $corners="64px 64px 0 64px">
          <Reply>
            <ReplyName>Rasch bot</ReplyName>
            <Emoji name="chart" size={66} /> Excel faylni yuboring <Emoji name="down" size={66} />
          </Reply>
          <FileRow>
            <FileBadge><FileIcon /></FileBadge>
            <FileInfo>
              <FileName href="#file">06-APREL (2).xls</FileName>
              <FileSize>22,1 KB XLS</FileSize>
            </FileInfo>
            <MoreButton type="button" aria-label="File options" $top><Dots /></MoreButton>
          </FileRow>
          <FileMeta $bright><time>17:39</time><Checks /></FileMeta>
          <BubbleTail right color="#7252d7" />
        </FileBubble>

        <Bubble $gap={24} $corners="64px 64px 64px 0">
          <Text $wide>
            <Emoji name="inbox" /> Excel fayl qabul qilindi! <Emoji name="check" />{"\n"}
            <Emoji name="refresh" /> Qayta ishlash boshlandi...{"\n\n"}
            <Emoji name="abacus" /> Rasch model hisoblari bajarilmoqda{"\n"}
            <Emoji name="scales" /> DTM tavsiya foizlari hisoblanmoqda{"\n"}
            <Emoji name="chart" /> Grafiklar tayyorlanmoqda
          </Text>
          <Meta $overlaid><time>17:39</time></Meta>
          <BubbleTail color="#222d38" />
        </Bubble>
      </Chat>

      <Composer>
        <MenuButton type="button"><MenuIcon />Menyu</MenuButton>
        <GifButton type="button">GIF</GifButton>
        <Field>
          <Caret />
          <MessageInput type="text" placeholder="Xabar" aria-label="Xabar" />
        </Field>
        <Actions>
          <button type="button" aria-label="Attach"><ClipIcon /></button>
          <button type="button" aria-label="Camera"><CameraIcon /></button>
        </Actions>
      </Composer>
      <NavBar><NavHandle /></NavBar>
    </Screen>
  );
}
